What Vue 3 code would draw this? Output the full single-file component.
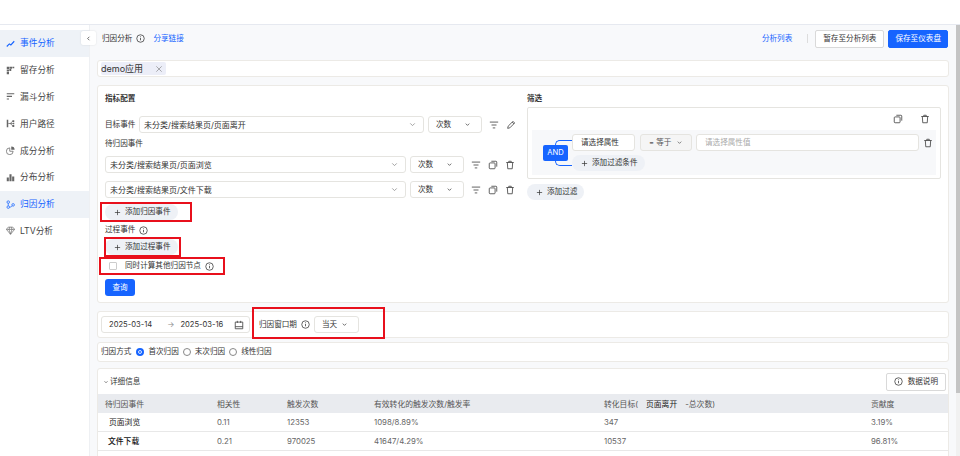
<template>
  <div class="page">
    <!-- icon sprite -->
    <svg class="sprite" aria-hidden="true">
      <symbol id="i-info" viewBox="0 0 12 12"><circle cx="6" cy="6" r="5" fill="none" stroke="currentColor" /><path d="M6 5.2v3.2M6 3.2v1" stroke="currentColor" fill="none" /></symbol>
      <symbol id="i-down" viewBox="0 0 12 12"><path d="M3 4.500 6 7.500 9 4.500" fill="none" stroke="currentColor" stroke-width="1.200" /></symbol>
      <symbol id="i-close" viewBox="0 0 12 12"><path d="M2 2l8 8M10 2l-8 8" fill="none" stroke="currentColor" stroke-width=".9" /></symbol>
      <symbol id="i-filter" viewBox="0 0 12 12"><path d="M1 2.500h10M3 6h6M4.500 9.500h3" fill="none" stroke="currentColor" /></symbol>
      <symbol id="i-copy" viewBox="0 0 12 12"><rect x="1.500" y="3.500" width="7" height="7" rx="1" fill="none" stroke="currentColor" /><path d="M4 1.500h5.500a1 1 0 0 1 1 1V8" fill="none" stroke="currentColor" /></symbol>
      <symbol id="i-trash" viewBox="0 0 12 12"><path d="M1.500 3h9M4.500 3V1.500h3V3M2.800 3l.5 7.500h5.400L9.200 3" fill="none" stroke="currentColor" /></symbol>
      <symbol id="i-pen" viewBox="0 0 12 12"><path d="M2 10l.6-2.600L8.400 1.600l2 2-5.800 5.800zM7.400 2.600l2 2" fill="none" stroke="currentColor" /></symbol>
      <symbol id="i-plus" viewBox="0 0 12 12"><path d="M6 1.500v9M1.500 6h9" fill="none" stroke="currentColor" stroke-width="1.200" /></symbol>
      <symbol id="i-cal" viewBox="0 0 12 12"><path d="M1.500 2.500h9v8h-9zM1.500 8h9M4 1v2.500M8 1v2.500" fill="none" stroke="currentColor" /></symbol>
      <symbol id="i-trend" viewBox="0 0 12 12"><path d="M1 10 4.500 6.500l2 1.500L11 3" fill="none" stroke="currentColor" stroke-width="1.500" /></symbol>
      <symbol id="i-keep" viewBox="0 0 12 12"><path d="M1 1h3v3H1zM4.500 1H8v2.500H4.500zM8.500 1H11v2H8.500zM1 4.500h3V7H1zM4.500 4h2.500v2.500H4.500zM1 7.500h3V11H1z" fill="currentColor" /></symbol>
      <symbol id="i-funnel" viewBox="0 0 12 12"><path d="M1 1.500h10V3H1zM1 5h7v1.500H1zM1 8.500h3V10H1z" fill="currentColor" /></symbol>
      <symbol id="i-path" viewBox="0 0 12 12"><path d="M1 1h2v10H1zM8.500 1.500H11v2.500H8.500zM8.500 8H11v2.500H8.500zM9 5h2v2H9z" fill="currentColor" /><path d="M3 6h2.500L9 3M5.500 6H9M5.500 6 9 9" fill="none" stroke="currentColor" /></symbol>
      <symbol id="i-pie" viewBox="0 0 12 12"><path d="M5 2.500a4.500 4.500 0 1 0 4.500 4.500H5z" fill="none" stroke="currentColor" /><path d="M7 .5a4.500 4.500 0 0 1 4.500 4.500H7z" fill="currentColor" /></symbol>
      <symbol id="i-bars" viewBox="0 0 12 12"><path d="M1 6h2.800v5H1zM4.600 1.500h2.800V11H4.600zM8.200 4.500H11V11H8.200z" fill="currentColor" /></symbol>
      <symbol id="i-attr" viewBox="0 0 12 12"><circle cx="3" cy="2.800" r="1.700" fill="none" stroke="currentColor" /><circle cx="3" cy="9.500" r="1.700" fill="none" stroke="currentColor" /><circle cx="9.500" cy="6.500" r="1.700" fill="none" stroke="currentColor" /><path d="M3 4.500v3.300M4.700 9.500C7 9.500 7.800 8.500 8.200 7.600" fill="none" stroke="currentColor" /></symbol>
      <symbol id="i-gem" viewBox="0 0 12 12"><path d="M3 1.500h6l2.500 3L6 11 .5 4.500zM.5 4.500h11M4 4.500 6 11l2-6.500M4 4.500l1-3M8 4.500l-1-3" fill="none" stroke="currentColor" stroke-width=".9" /></symbol>
    </svg>

    <header class="topbar"></header>

    <div class="layout">
      <aside class="sidebar">
        <div
          v-for="item in menus"
          :key="item.name"
          class="menu-item"
          :class="{ current: item.current, selected: item.selected }"
        >
          <svg class="menu-icon"><use :href="`#${item.icon}`" /></svg>
          <span>{{ item.name }}</span>
        </div>
        <button class="collapse-btn">
          <svg class="icon-s flip"><use href="#i-down" /></svg>
        </button>
      </aside>

      <main class="main">
        <div class="head">
          <span class="head-title">归因分析</span>
          <svg class="icon-m"><use href="#i-info" /></svg>
          <a class="link share">分享链接</a>
          <a class="link list">分析列表</a>
          <i class="head-sep"></i>
          <button class="btn">暂存至分析列表</button>
          <button class="btn primary">保存至仪表盘</button>
        </div>

        <div class="app-bar">
          <span class="app-tag">demo应用<svg class="tag-close"><use href="#i-close" /></svg></span>
        </div>

        <section class="card config">
          <div class="col">
            <div class="title">指标配置</div>
            <div class="row target">
              <span class="row-label">目标事件</span>
              <div class="select target-select">
                <span>未分类/搜索结果页/页面离开</span>
                <svg class="icon-m muted"><use href="#i-down" /></svg>
              </div>
              <div class="select count">
                <span>次数</span>
                <svg class="icon-s"><use href="#i-down" /></svg>
              </div>
              <div class="tools">
                <svg class="icon-t"><use href="#i-filter" /></svg>
                <svg class="icon-t"><use href="#i-pen" /></svg>
              </div>
            </div>

            <div class="label first">待归因事件</div>
            <div v-for="(name, i) in attrEvents" :key="name" class="row" :class="i ? 'second' : 'event'">
              <div class="select event-select">
                <span>{{ name }}</span>
                <svg class="icon-m muted"><use href="#i-down" /></svg>
              </div>
              <div class="select count">
                <span>次数</span>
                <svg class="icon-s"><use href="#i-down" /></svg>
              </div>
              <div class="tools">
                <svg class="icon-t"><use href="#i-filter" /></svg>
                <svg class="icon-t"><use href="#i-copy" /></svg>
                <svg class="icon-t"><use href="#i-trash" /></svg>
              </div>
            </div>

            <button class="add-btn marked m-attr">
              <svg class="icon-s"><use href="#i-plus" /></svg>添加归因事件
            </button>
            <div class="label process">
              过程事件
              <svg class="icon-m"><use href="#i-info" /></svg>
            </div>
            <button class="add-btn marked m-process">
              <svg class="icon-s"><use href="#i-plus" /></svg>添加过程事件
            </button>
            <label class="check marked m-check">
              <i class="check-box"></i>
              <span>同时计算其他归因节点</span>
              <svg class="icon-m"><use href="#i-info" /></svg>
            </label>
            <button class="query-btn">查询</button>
          </div>

          <div class="col">
            <div class="title">筛选</div>
            <div class="filter-box">
              <div class="filter-tools">
                <svg class="icon-t"><use href="#i-copy" /></svg>
                <svg class="icon-t"><use href="#i-trash" /></svg>
              </div>
              <div class="filter-inner">
                <div class="relation"><span class="and">AND</span></div>
                <div class="conditions">
                  <div class="condition">
                    <div class="select attr">请选择属性</div>
                    <div class="select op filled">
                      <span>= 等于</span>
                      <svg class="icon-s"><use href="#i-down" /></svg>
                    </div>
                    <div class="select value">请选择属性值</div>
                    <svg class="icon-t del"><use href="#i-trash" /></svg>
                  </div>
                  <button class="add-btn small">
                    <svg class="icon-s"><use href="#i-plus" /></svg>添加过滤条件
                  </button>
                </div>
              </div>
            </div>
            <button class="add-btn filter-add">
              <svg class="icon-s"><use href="#i-plus" /></svg>添加过滤
            </button>
          </div>
        </section>

        <section class="card date-bar">
          <div class="date-picker">
            <span>2025-03-14</span>
            <span class="arrow">→</span>
            <span>2025-03-16</span>
            <svg class="icon-t cal"><use href="#i-cal" /></svg>
          </div>
          <div class="window marked m-window">
            <span>归因窗口期</span>
            <svg class="icon-m"><use href="#i-info" /></svg>
            <div class="select window-select">
              <span>当天</span>
              <svg class="icon-s"><use href="#i-down" /></svg>
            </div>
          </div>
        </section>

        <section class="card method">
          <span class="method-label">归因方式</span>
          <label v-for="m in methods" :key="m.name" class="radio">
            <i class="dot" :class="{ on: m.on }"></i>{{ m.name }}
          </label>
        </section>

        <section class="card detail">
          <div class="detail-head">
            <svg class="icon-xs"><use href="#i-down" /></svg>
            <span>详细信息</span>
            <button class="btn explain">
              <svg class="icon-m"><use href="#i-info" /></svg>数据说明
            </button>
          </div>
          <div class="tr th">
            <span>待归因事件</span>
            <span>相关性</span>
            <span>触发次数</span>
            <span>有效转化的触发次数/触发率</span>
            <span>转化目标(<b class="target-name">页面离开</b>-总次数)</span>
            <span>贡献度</span>
          </div>
          <div v-for="row in tableRows" :key="row.name" class="tr">
            <span class="event-name" :class="row.cls">{{ row.name }}</span>
            <span>{{ row.corr }}</span>
            <span>{{ row.count }}</span>
            <span>{{ row.rate }}</span>
            <span>{{ row.total }}</span>
            <span>{{ row.share }}</span>
          </div>
        </section>
      </main>

      <div class="scrollbar"><i></i></div>
    </div>
  </div>
</template>

<script setup>
const menus = [
  { name: '事件分析', icon: 'i-trend', current: true },
  { name: '留存分析', icon: 'i-keep' },
  { name: '漏斗分析', icon: 'i-funnel' },
  { name: '用户路径', icon: 'i-path' },
  { name: '成分分析', icon: 'i-pie' },
  { name: '分布分析', icon: 'i-bars' },
  { name: '归因分析', icon: 'i-attr', selected: true },
  { name: 'LTV分析', icon: 'i-gem' },
];

const attrEvents = ['未分类/搜索结果页/页面浏览', '未分类/搜索结果页/文件下载'];

const methods = [
  { name: '首次归因', on: true },
  { name: '末次归因' },
  { name: '线性归因' },
];

const tableRows = [
  { name: '页面浏览', corr: '0.11', count: '12353', rate: '1098/8.89%', total: '347', share: '3.19%', cls: 'first-name' },
  { name: '文件下载', corr: '0.21', count: '970025', rate: '41647/4.29%', total: '10537', share: '96.81%', cls: 'second-name' },
];
</script>

<style>
html,
body {
  margin: 0;
  background: #fff;
}
</style>

<style scoped>
.page {
  width: 960px;
  height: 456px;
  overflow: hidden;
  font-family: Inter, "Noto Sans CJK SC", sans-serif;
  font-size: 7.6px;
  line-height: 10px;
  color: #333;
  background: #fff;
  white-space: nowrap;
}

.sprite {
  display: none;
}

.topbar {
  height: 24px;
  border-bottom: 1px solid #e6e9f0;
}

.layout {
  display: flex;
  height: 431px;
}

.sidebar {
  position: relative;
  flex: none;
  width: 90px;
  padding-top: 5px;
  box-sizing: border-box;
  background: #fff;
  border-right: 1px solid #eef0f3;
}

.menu-item {
  display: flex;
  align-items: center;
  gap: 5px;
  height: 26.8px;
  padding-left: 6px;
  font-size: 8.7px;
  color: #444;
}

.menu-item.current,
.menu-item.selected {
  color: #1664ff;
  background: #eef2f7;
}

.menu-icon {
  width: 9px;
  height: 9px;
  color: #666;
}

.current .menu-icon,
.selected .menu-icon {
  color: #1664ff;
}

.collapse-btn {
  position: absolute;
  top: 6px;
  right: -7px;
  display: flex;
  align-items: center;
  justify-content: center;
  width: 15px;
  height: 14px;
  padding: 0;
  border: none;
  border-radius: 2px;
  background: #fff;
  color: #333;
  box-shadow: 0 0 2px rgba(0, 0, 0, 0.12);
}

.flip {
  transform: rotate(90deg);
}

.icon-xs {
  width: 6px;
  height: 6px;
  flex: none;
}

.icon-s {
  width: 7px;
  height: 7px;
  flex: none;
}

.icon-m {
  width: 9px;
  height: 9px;
  flex: none;
}

.icon-t {
  width: 10px;
  height: 10px;
  flex: none;
  color: #444;
}

.muted {
  color: #999;
}

.main {
  flex: 1;
  min-width: 0;
  padding: 0 7px;
  background: #f8f9fb;
}

.head {
  display: flex;
  align-items: center;
  height: 27px;
  padding: 0 1px 0 5px;
  margin-bottom: 8px;
}

.head-title {
  margin-right: 4px;
}

.link {
  color: #1664ff;
}

.share {
  margin-left: 8px;
}

.list {
  margin-left: auto;
}

.head-sep {
  width: 1px;
  height: 9px;
  margin: 0 7px 0 15px;
  background: #ddd;
}

.btn {
  height: 18px;
  padding: 0 7px;
  border: 1px solid #d9d9d9;
  border-radius: 2px;
  background: #fff;
  color: #333;
  font: inherit;
}

.btn.primary {
  margin-left: 4px;
  padding: 0 6px;
  border-color: #1664ff;
  background: #1664ff;
  color: #fff;
}

.app-bar {
  display: flex;
  align-items: center;
  height: 17px;
  box-sizing: border-box;
  padding-left: 3px;
  margin-bottom: 8px;
  border: 1px solid #eceae6;
  border-radius: 3px;
  background: #fff;
}

.app-tag {
  display: flex;
  align-items: center;
  height: 13px;
  padding-right: 3px;
  border-radius: 2px;
  background: #eceef8;
  font-size: 9px;
}

.tag-close {
  width: 8px;
  height: 8px;
  margin-left: 12px;
  color: #777;
}

.card {
  box-sizing: border-box;
  border: 1px solid #eceae6;
  border-radius: 3px;
  background: #fff;
}

.config {
  display: grid;
  grid-template-columns: 414px 414px;
  gap: 8px;
  height: 218px;
  padding: 8px 7px 0;
  margin-bottom: 8px;
}

.title {
  font-weight: 700;
}

.col {
  min-width: 0;
}

.row {
  display: flex;
  align-items: center;
  gap: 4px;
}

.row.target {
  margin-top: 12px;
}

.row.event {
  margin-top: 7px;
}

.row.second {
  margin-top: 8px;
}

.row-label {
  width: 30px;
}

.select {
  display: flex;
  align-items: center;
  justify-content: space-between;
  box-sizing: border-box;
  height: 17px;
  padding: 0 4px;
  border: 1px solid #e5e4e0;
  border-radius: 3px;
  background: #fff;
}

.target-select {
  width: 285px;
  padding-right: 6px;
  font-size: 8px;
}

.event-select {
  width: 301px;
  padding-right: 6px;
  font-size: 8px;
}

.count {
  width: 54px;
  padding: 0 10px 0 7px;
}

.tools {
  display: flex;
  gap: 7px;
  margin-left: 3px;
}

.label.first {
  margin-top: 6px;
}

.label.process {
  display: flex;
  align-items: center;
  gap: 4px;
  margin-top: 5px;
}

.add-btn {
  display: flex;
  align-items: center;
  gap: 4px;
  height: 16px;
  padding: 0 7px 0 9px;
  border: none;
  border-radius: 8px;
  background: #eef1f6;
  color: #333;
  font: inherit;
}

.marked {
  position: relative;
}

.marked::after {
  content: "";
  position: absolute;
  border: 2px solid #e8101c;
  pointer-events: none;
}

.m-attr {
  margin-top: 6px;
}

.m-attr::after {
  inset: -2px -14px -2px -5px;
}

.m-process {
  margin-top: 4px;
}

.m-process::after {
  inset: -2px -3px -2px -1px;
}

.check {
  display: flex;
  align-items: center;
  width: fit-content;
  height: 10px;
  margin-top: 6px;
  padding-left: 4px;
}

.m-check::after {
  inset: -4px -11px -4px -6px;
}

.check-box {
  width: 6px;
  height: 6px;
  margin-right: 8px;
  border: 1px solid #ccc;
  border-radius: 1px;
}

.check span {
  margin-right: 4px;
}

.query-btn {
  display: block;
  width: 30px;
  height: 17px;
  margin-top: 8px;
  padding: 0;
  border: none;
  border-radius: 3px;
  background: #1664ff;
  color: #fff;
  font: inherit;
}

.filter-box {
  box-sizing: border-box;
  height: 72px;
  margin-top: 3px;
  padding: 0 4px;
  border: 1px solid #e5e4e0;
  border-radius: 2px;
}

.filter-tools {
  display: flex;
  justify-content: flex-end;
  align-items: center;
  gap: 17px;
  height: 22px;
  padding-right: 6px;
}

.filter-inner {
  display: flex;
  height: 45px;
  padding: 4px 0 0 11px;
  box-sizing: border-box;
  background: #f7f8fa;
  gap: 4px;
}

.relation {
  position: relative;
  display: flex;
  align-items: center;
  height: 38px;
}

.relation::before {
  content: "";
  position: absolute;
  top: 6px;
  left: 12px;
  width: 16px;
  height: 24px;
  border: 1px solid #1664ff;
  border-right: none;
  border-radius: 5px 0 0 5px;
}

.and {
  position: relative;
  width: 25px;
  height: 16px;
  border-radius: 2px;
  background: #1664ff;
  color: #fff;
  text-align: center;
  line-height: 16px;
}

.condition {
  display: flex;
  align-items: center;
  gap: 4px;
  margin-bottom: 4px;
}

.attr {
  width: 63px;
  padding-left: 8px;
}

.op {
  width: 52px;
  margin-left: 1px;
  padding: 0 8px;
  color: #555;
}

.filled {
  background: #f5f5f5;
}

.value {
  width: 223px;
  padding-left: 8px;
  color: #aaa;
}

.filter-add {
  margin-top: 5px;
}

.date-bar {
  display: flex;
  align-items: center;
  height: 27px;
  padding-left: 3px;
  margin-bottom: 4px;
}

.date-picker {
  display: flex;
  align-items: center;
  box-sizing: border-box;
  width: 149px;
  height: 17px;
  padding: 0 5px 0 7px;
  border: 1px solid #e5e4e0;
  border-radius: 3px;
}

.arrow {
  margin: 0 6px 0 15px;
  color: #888;
}

.cal {
  margin-left: auto;
}

.window {
  display: flex;
  align-items: center;
  gap: 4px;
  margin-left: 9px;
}

.m-window::after {
  inset: -9px -26px -6px -7px;
}

.window-select {
  width: 45px;
  padding: 0 10px 0 7px;
}

.method {
  display: flex;
  align-items: center;
  height: 20px;
  padding-left: 3px;
  margin-bottom: 6px;
}

.method-label {
  margin-right: 5px;
}

.radio {
  display: flex;
  align-items: center;
  gap: 4px;
  margin-right: 4px;
}

.dot {
  box-sizing: border-box;
  width: 8px;
  height: 8px;
  border: 1px solid #888;
  border-radius: 50%;
}

.dot.on {
  border: 2px solid #1664ff;
  background: #1664ff;
  box-shadow: inset 0 0 0 1px #fff;
}

.detail {
  height: 100px;
}

.detail-head {
  display: flex;
  align-items: center;
  gap: 1px;
  height: 25px;
  padding: 0 2px 0 5px;
}

.explain {
  display: flex;
  align-items: center;
  gap: 5px;
  margin-left: auto;
  padding: 0 7px;
}

.tr {
  display: grid;
  grid-template-columns: 112px 70px 87px 230px 267px 1fr;
  align-items: center;
  height: 18px;
  padding-left: 7px;
  border-bottom: 1px solid #e8e8e8;
  color: #666;
  font-size: 7.8px;
}

.th {
  height: 19px;
  border-bottom: none;
  background: #e9ebef;
  color: #555;
}

.target-name {
  margin: 0 8px;
  font-weight: 400;
  color: #222;
}

.event-name {
  color: #222;
}

.first-name {
  padding-left: 4px;
}

.second-name {
  padding-left: 3px;
  font-weight: 500;
  color: #111;
}

.scrollbar {
  flex: none;
  width: 4px;
  background: #f1f1f1;
}

.scrollbar i {
  display: block;
  height: 368px;
  background: #c4c4c4;
}
</style>
